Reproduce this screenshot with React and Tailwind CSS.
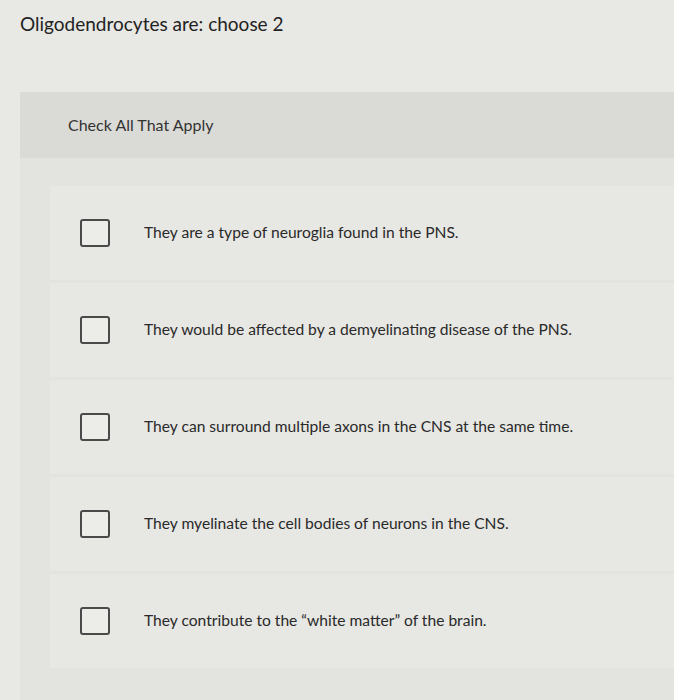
const options = [
    "They are a type of neuroglia found in the PNS.",
    "They would be affected by a demyelinating disease of the PNS.",
    "They can surround multiple axons in the CNS at the same time.",
    "They myelinate the cell bodies of neurons in the CNS.",
    "They contribute to the “white matter” of the brain.",
];

export default function App() {
    return (
        <div
            className="min-h-[700px] w-full bg-[#e8e8e4] text-[#2d2d2d]"
            style={{ fontFamily: "Lato, 'Open Sans', sans-serif" }}
        >
            <div className="px-5 pt-[12px] pb-[56px]">
                <h1 className="text-[19px] leading-[24px] text-[#222]">Oligodendrocytes are: choose 2</h1>
            </div>

            <div className="ml-5 bg-[#e3e3df]">
                <div className="flex h-[66px] items-center bg-[#dadad6] pl-[48px]">
                    <span className="text-[16px] text-[#333]">Check All That Apply</span>
                </div>

                <div className="flex flex-col gap-[3px] pt-[28px] pb-[40px] pl-[30px]">
                    {options.map((text) => (
                        <label
                            key={text}
                            className="flex h-[94px] items-center bg-[#e7e7e3]"
                        >
                            <span className="ml-[30px] h-[28px] w-[30px] rounded-[3px] border-2 border-[#4a4a4a] bg-[#ecece8]" />
                            <span className="ml-[34px] text-[15.6px] text-[#2a2a2a]">{text}</span>
                        </label>
                    ))}
                </div>
            </div>
        </div>
    );
}
